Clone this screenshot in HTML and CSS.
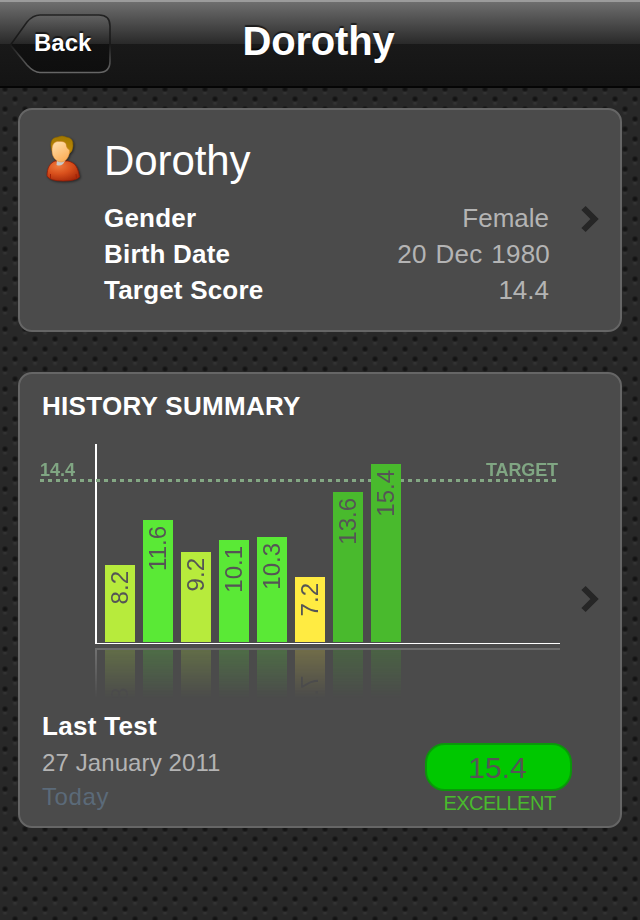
FILE: index.html
```
<!DOCTYPE html>
<html lang="en">
<head>
  <meta charset="UTF-8">
  <title>Dorothy</title>
  <link rel="stylesheet" href="styles.css">
</head>
<body>

<header class="navbar">
  <a class="back">
    <svg class="back-shape" width="102" height="62" viewBox="0 0 102 62">
      <defs>
        <linearGradient id="backFill" x1="0" y1="0" x2="0" y2="1">
          <stop offset="0" stop-color="#626262"/>
          <stop offset=".5" stop-color="#272727"/>
          <stop offset=".5" stop-color="#111"/>
          <stop offset="1" stop-color="#0e0e0e"/>
        </linearGradient>
        <linearGradient id="backEdge" x1="0" y1="0" x2="0" y2="1">
          <stop offset="0" stop-color="#222"/>
          <stop offset=".5" stop-color="#171717"/>
          <stop offset=".75" stop-color="#444"/>
          <stop offset="1" stop-color="#666"/>
        </linearGradient>
      </defs>
      <path d="M1.500 31 L18 8 Q24 1 31 1 H90 Q101 1 101 12 V47 Q101 58.500 90 58.500 H31 Q25 58.500 18 51 Z" fill="url(#backFill)" stroke="url(#backEdge)" stroke-width="1.6"/>
    </svg>
    <span>Back</span>
  </a>
  <h1>Dorothy</h1>
</header>

<main>
  <!-- profile -->
  <section class="card profile">
    <svg class="avatar" width="38" height="50" viewBox="0 0 38 50">
      <defs>
        <radialGradient id="body" cx=".35" cy=".25" r=".8">
          <stop offset="0" stop-color="#ef7a3c"/>
          <stop offset=".5" stop-color="#d9501c"/>
          <stop offset="1" stop-color="#a82a0a"/>
        </radialGradient>
        <linearGradient id="face" x1="0" y1="0" x2=".5" y2="1">
          <stop offset="0" stop-color="#ffe2b0"/>
          <stop offset="1" stop-color="#fcb05c"/>
        </linearGradient>
        <linearGradient id="hair" x1="0" y1="0" x2="0" y2="1">
          <stop offset="0" stop-color="#a07800"/>
          <stop offset="1" stop-color="#c48c08"/>
        </linearGradient>
      </defs>
      <path d="M9 26 C4 28 1 33 1 41 Q4 46 17 46 Q30 46 33.500 42 C32 33 30 28 22 26 Z" fill="url(#body)" stroke="#941d08" stroke-width=".8"/>
      <path d="M4.500 43 V39 M30.500 43 L30 39" stroke="#a32005" fill="none"/>
      <path d="M11 25 L10.500 30 Q14 31.500 17 29 L19 26 Z" fill="#c9c9c9"/>
      <path d="M6 16 C3.500 8 5 2.500 12 2 Q16 0 20 2 Q28 3 27 11 Q27 16 23 19 L16 20 Z" fill="url(#hair)" stroke="#8b6500" stroke-width=".6"/>
      <path d="M6 16 C6 9 8 6.500 13 6.500 Q19 6 20 9 Q20 13 23.500 15 C24 21 20 27 15.500 27 C10 27 6 22 6 16 Z" fill="url(#face)" stroke="#d88a36" stroke-width=".5"/>
    </svg>
    <div class="details">
      <h2>Dorothy</h2>
      <dl>
        <div class="row"><dt>Gender</dt><dd>Female</dd></div>
        <div class="row birth"><dt>Birth Date</dt><dd>20 Dec 1980</dd></div>
        <div class="row"><dt>Target Score</dt><dd>14.4</dd></div>
      </dl>
    </div>
    <svg class="chevron" width="20" height="28" viewBox="0 0 20 28"><path d="M3.500 3 L14.500 14 L3.500 25" fill="none" stroke="#262626" stroke-width="6"/></svg>
  </section>

  <!-- history -->
  <section class="card history">
    <div class="summary">
      <h3>HISTORY SUMMARY</h3>
      <div class="chart">
        <div class="plot">
          <div class="target-line"></div>
          <div class="bar fair" style="height: 77px"><span>8.2</span></div>
          <div class="bar good" style="height: 122px"><span>11.6</span></div>
          <div class="bar fair" style="height: 90px"><span>9.2</span></div>
          <div class="bar good" style="height: 102px"><span>10.1</span></div>
          <div class="bar good" style="height: 105px"><span>10.3</span></div>
          <div class="bar poor" style="height: 65px"><span>7.2</span></div>
          <div class="bar excellent" style="height: 150px"><span>13.6</span></div>
          <div class="bar excellent" style="height: 178px"><span>15.4</span></div>
        </div>
        <div class="floor"></div>
        <span class="target-value">14.4</span>
        <span class="target-label">TARGET</span>
      </div>
      <div class="last">
        <div class="last-test">
          <h3>Last Test</h3>
          <p class="date">27 January 2011</p>
          <p class="today">Today</p>
        </div>
        <div class="result">
          <div class="pill">15.4</div>
          <div class="rating">EXCELLENT</div>
        </div>
      </div>
    </div>
    <svg class="chevron" width="20" height="28" viewBox="0 0 20 28"><path d="M3.500 3 L14.500 14 L3.500 25" fill="none" stroke="#262626" stroke-width="6"/></svg>
  </section>
</main>

</body>
</html>
```
FILE: styles.css
```
* {
  box-sizing: border-box;
}

body {
  margin: 0;
  height: 920px;
  overflow: hidden;
  font-family: "Liberation Sans", Helvetica, Arial, sans-serif;
  color: #fff;
  background-color: #282828;
  /* perforated metal */
  background-image:
    radial-gradient(circle at 5px 9px, #111 0, #151515 1.5px, transparent 3.5px),
    radial-gradient(circle at 15px 19px, #111 0, #151515 1.5px, transparent 3.5px),
    radial-gradient(circle at 15px -1px, #111 0, #151515 1.5px, transparent 3.5px),
    radial-gradient(ellipse at 5px 13px, #363636 0, transparent 3px),
    radial-gradient(ellipse at 15px 3px, #363636 0, transparent 3px);
  background-size: 20px 20px;
}

h1, h2, h3, p, dl, dd {
  margin: 0;
}

.navbar {
  position: relative;
  height: 88px;
  padding: 12px 9px;
  border-top: 2px solid #9b9b9b;
  border-bottom: 2px solid #050505;
  background: linear-gradient(#6e6e6e, #292929 42px, #191919 42px, #141414);
}

.navbar h1 {
  position: absolute;
  left: 0;
  right: 0;
  top: 16px;
  text-align: center;
  font-size: 40px;
  line-height: 46px;
  letter-spacing: -0.2px;
  text-indent: -3px;
  text-shadow: 0 -2px 1px rgba(0,0,0,0.6);
}

.back {
  display: grid;
  width: 102px;
  height: 62px;
}

.back-shape, .back span {
  grid-area: 1 / 1;
}

.back span {
  padding-left: 25px;
  font-size: 24px;
  font-weight: bold;
  line-height: 58px;
  text-shadow: 0 -2px 1px rgba(0,0,0,0.6);
}

main {
  display: flex;
  flex-direction: column;
  gap: 40px;
  padding: 20px 18px;
}

.card {
  display: flex;
  border: 2px solid #666;
  border-radius: 14px;
  background: #4b4b4b;
}

.chevron {
  flex: none;
  align-self: center;
  margin-bottom: 2px;
}

.profile {
  height: 224px;
  padding-left: 26px;
}

.avatar {
  flex: none;
  margin-top: 25px;
  filter: drop-shadow(1px 1px 1px rgba(0,0,0,0.5));
}

.details {
  width: 446px;
  margin-left: 20px;
  margin-right: 30px;
  padding-top: 27px;
}

.details h2 {
  font-size: 42px;
  font-weight: normal;
  line-height: 48px;
  letter-spacing: -0.1px;
}

.details dl {
  padding-top: 15px;
}

.row {
  display: flex;
  justify-content: space-between;
  font-size: 26px;
  line-height: 36px;
  padding-right: 1px;
}

.row dt {
  font-weight: bold;
  letter-spacing: 0.2px;
}

.row dd {
  color: #b4b4b4;
}

.birth {
  padding-right: 0;
}

.birth dd {
  letter-spacing: 0.2px;
  word-spacing: 1.5px;
}

.history {
  height: 456px;
}

.summary {
  width: 540px;
  margin-right: 20px;
  padding: 17px 0 0 20px;
}

h3 {
  padding-left: 2px;
  font-size: 26px;
  line-height: 30px;
  letter-spacing: 0.3px;
}

.chart {
  position: relative;
  width: 520px;
  margin-top: 23px;
  padding-left: 55px;
}

.plot {
  position: relative;
  display: flex;
  align-items: flex-end;
  gap: 8px;
  height: 200px;
  padding: 0 0 1px 8px;
  border-left: 2px solid #fff;
  border-bottom: 1px solid #fff;
  -webkit-box-reflect: below 4px linear-gradient(transparent 75%, rgba(255,255,255,0.22));
}

/* mirrored baseline */
.floor {
  position: absolute;
  left: 55px;
  right: 0;
  top: 204px;
  height: 2px;
  background: #6c6c6c;
}

.bar {
  position: relative;
  width: 30px;
  padding-top: 6px;
  font-size: 24px;
  line-height: 30px;
  color: #555;
}

.bar span {
  display: block;
  writing-mode: vertical-rl;
  transform: rotate(180deg);
}

.fair { background: #b7eb3c; }
.good { background: #5ae936; }
.poor { background: #ffeb42; }
.excellent { background: #49ba2d; }

.target-line {
  position: absolute;
  left: -57px;
  top: 35px;
  width: 516px;
  height: 3px;
  background: repeating-linear-gradient(90deg, #84a884 0, #84a884 4px, transparent 4px, transparent 8px);
}

.target-value, .target-label {
  position: absolute;
  top: 16px;
  font-size: 18px;
  font-weight: bold;
  line-height: 20px;
  color: #80a683;
}

.target-value {
  left: 0;
}

.target-label {
  right: 2px;
  letter-spacing: -0.1px;
}

.last {
  display: flex;
  justify-content: space-between;
  margin-top: 67px;
}

.date, .today {
  padding-left: 2px;
  font-size: 24px;
  line-height: 34px;
  color: #b4b4b4;
}

.date {
  padding-top: 5px;
  letter-spacing: 0.1px;
}

.today {
  color: #5b6a79;
  letter-spacing: 0.6px;
}

.result {
  width: 147px;
  margin-right: -12px;
  padding-top: 32px;
  text-align: center;
}

.pill {
  height: 48px;
  border: 2px solid #0a980a;
  border-radius: 20px;
  background: #00c800;
  font-size: 30px;
  line-height: 46px;
  text-indent: -2px;
  color: #555;
}

.rating {
  padding-left: 2px;
  font-size: 20px;
  line-height: 24px;
  letter-spacing: -0.5px;
  color: #49ba2d;
}
```
